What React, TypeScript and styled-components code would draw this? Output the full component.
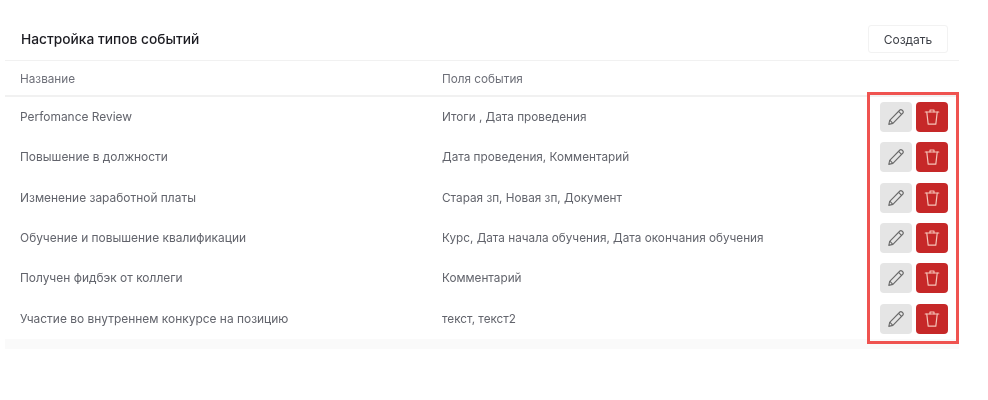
import React from "react";
import styled, { createGlobalStyle } from "styled-components";

const Global = createGlobalStyle`
  html, body { margin: 0; padding: 0; background: #fff; }
  body { font-family: Inter, "Noto Sans", sans-serif; }
`;

const Page = styled.div`
  width: 988px;
  height: 400px;
  padding: 20px 29px 0 5px;
  box-sizing: border-box;
  overflow: hidden;
  filter: blur(0.45px);
`;

const Card = styled.section`
  position: relative;
  width: 954px;
  background: #fff;
`;

const Header = styled.header`
  display: flex;
  align-items: center;
  justify-content: space-between;
  height: 38px;
  padding: 0 11px 2px 16px;
  border-bottom: 1px solid #f1f1f1;
`;

const Title = styled.h1`
  margin: 0;
  font-size: 13.75px;
  font-weight: 500;
  color: #1c1c22;
`;

const CreateButton = styled.button`
  width: 80px;
  height: 28px;
  background: #fff;
  border: 1px solid #f2f2f2;
  border-radius: 3px;
  font: 400 12px Inter, sans-serif;
  color: #3c3f46;
`;

const Row = styled.div<{ $head?: boolean }>`
  display: grid;
  grid-template-columns: 422px 1fr 68px;
  align-items: center;
  height: ${(p) => (p.$head ? "33px" : "40.3px")};
  padding: ${(p) => (p.$head ? "1px" : "0")} 11px 0 15px;
  font-size: 11.75px;
  line-height: 14px;
  color: ${(p) => (p.$head ? "#6d6f78" : "#62646c")};
  border-bottom: ${(p) => (p.$head ? "2px solid #f1f1f1" : "none")};
`;

const Name = styled.span`
  font-size: 11.95px;
`;

const Actions = styled.div`
  display: flex;
  gap: 4px;
`;

const IconButton = styled.button<{ $danger?: boolean }>`
  display: flex;
  align-items: center;
  justify-content: center;
  width: 32px;
  height: 30px;
  padding: 0;
  border: none;
  border-radius: 4px;
  background: ${(p) => (p.$danger ? "#c62828" : "#e5e5e5")};
  color: ${(p) => (p.$danger ? "#f5c4b8" : "#6a6a6a")};
`;

const Footer = styled.div`
  height: 10px;
  background: #fafafa;
`;

const Highlight = styled.div`
  position: absolute;
  left: 862px;
  top: 72px;
  width: 92px;
  height: 252px;
  box-sizing: border-box;
  border: 3px solid #ef5350;
  pointer-events: none;
`;

const Pencil = () => (
  <svg width="20" height="20" viewBox="0 0 20 20" fill="none" stroke="currentColor" strokeWidth="1.1" strokeLinejoin="round">
    <path d="M2.8 17.4l.9-4.1L13.9 3a1.4 1.4 0 0 1 2 0l1 1a1.4 1.4 0 0 1 0 2L6.9 16.4z" />
    <path d="M12.6 4.4l2.9 3M3.8 13.2l3 3.1" />
  </svg>
);

const Trash = () => (
  <svg width="20" height="20" viewBox="0 0 20 20" fill="none" stroke="currentColor" strokeWidth="1.2" strokeLinejoin="round" strokeLinecap="round">
    <path d="M3.2 5h13.6" />
    <path d="M8 4.8V3h4v1.8" />
    <path d="M4.8 5.2l1.4 12h7.6l1.4-12" />
  </svg>
);

const rows = [
  ["Perfomance Review", "Итоги , Дата проведения"],
  ["Повышение в должности", "Дата проведения, Комментарий"],
  ["Изменение заработной платы", "Старая зп, Новая зп, Документ"],
  ["Обучение и повышение квалификации", "Курс, Дата начала обучения, Дата окончания обучения"],
  ["Получен фидбэк от коллеги", "Комментарий"],
  ["Участие во внутреннем конкурсе на позицию", "текст, текст2"],
];

export default function App() {
  return (
    <Page>
      <Global />
      <Card>
        <Header>
          <Title>Настройка типов событий</Title>
          <CreateButton>Создать</CreateButton>
        </Header>
        <Row $head>
          <span>Название</span>
          <span>Поля события</span>
        </Row>
        {rows.map(([name, fields]) => (
          <Row key={name}>
            <Name>{name}</Name>
            <span>{fields}</span>
            <Actions>
              <IconButton aria-label="Изменить"><Pencil /></IconButton>
              <IconButton $danger aria-label="Удалить"><Trash /></IconButton>
            </Actions>
          </Row>
        ))}
        <Footer />
        <Highlight />
      </Card>
    </Page>
  );
}
